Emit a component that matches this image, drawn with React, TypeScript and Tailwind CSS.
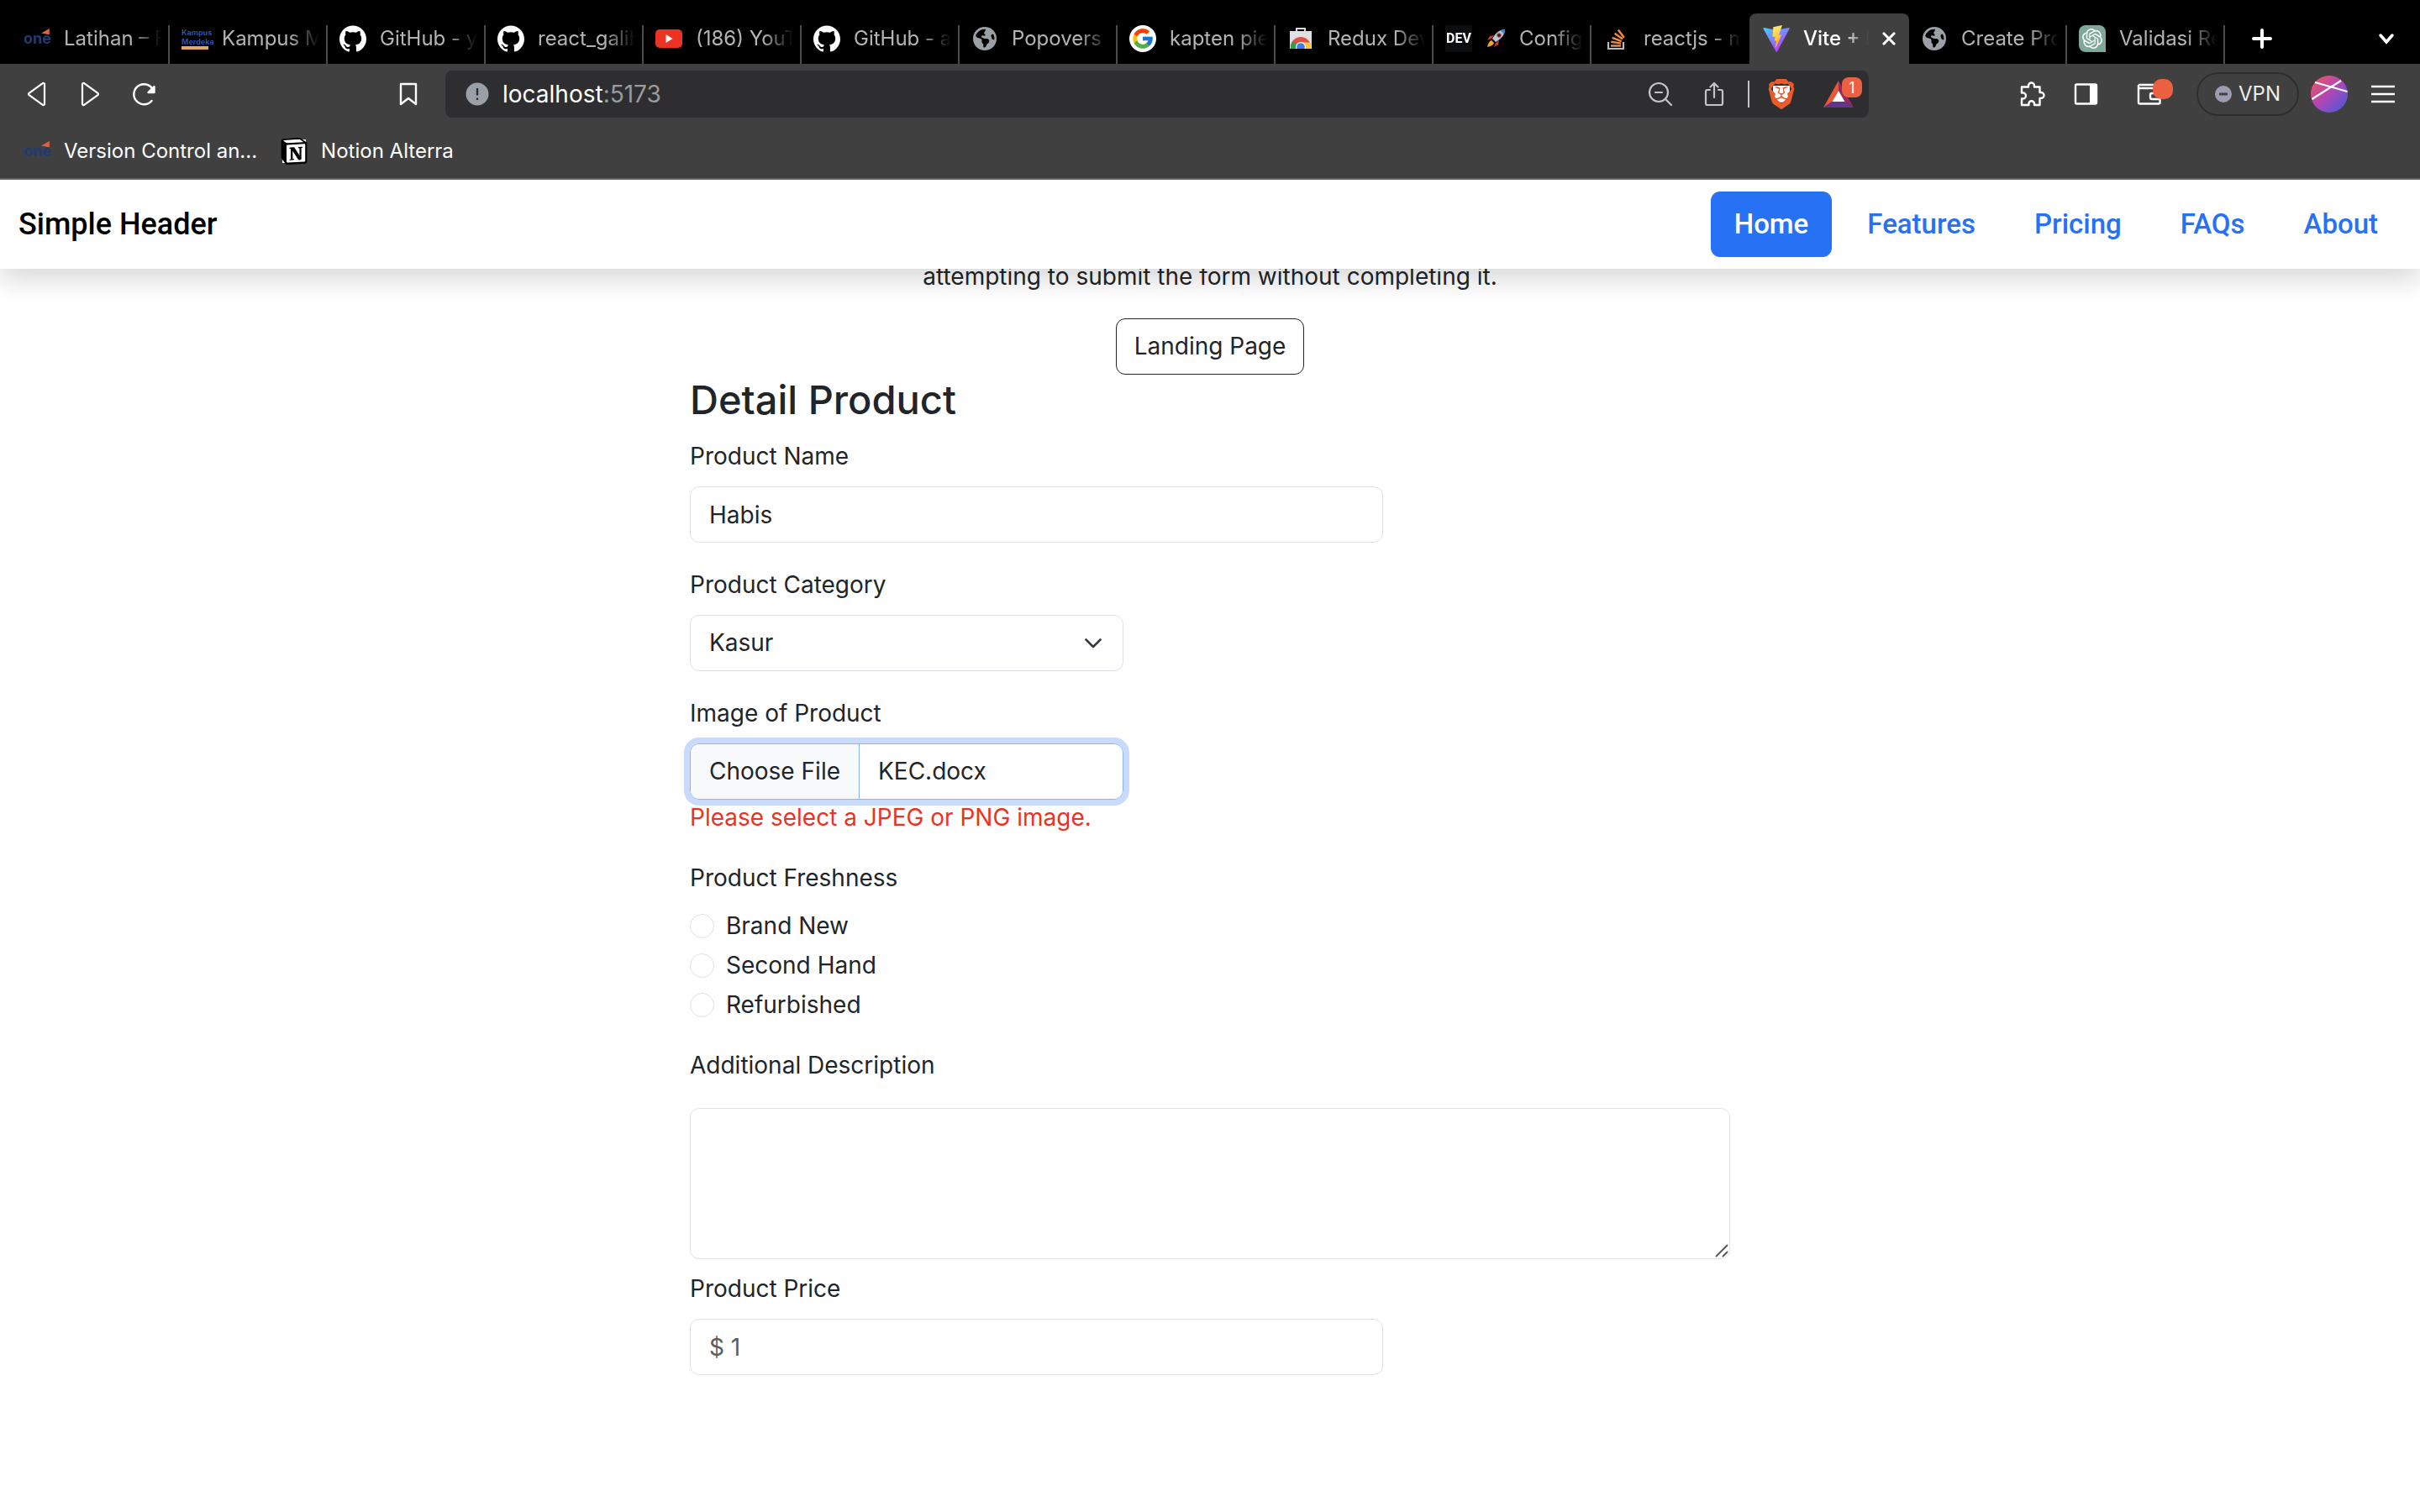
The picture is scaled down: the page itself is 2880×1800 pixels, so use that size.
import React, { useEffect, useRef } from "react";
import { FcGoogle } from "react-icons/fc";
import { SiBrave, SiNotion, SiOpenai, SiGithub } from "react-icons/si";
import { FaEarthAmericas } from "react-icons/fa6";

function OneIcon() {
  return (
    <span className="relative block w-8 text-[18px] font-bold leading-8 text-[#1f3b73]" aria-hidden="true">
      one
      <svg viewBox="0 0 12 10" className="absolute right-0 top-1 h-2 w-3"><path d="M0 7 12 0v9z" fill="#e2643f" /></svg>
    </span>
  );
}

function KampusIcon() {
  return (
    <span className="block w-8 text-[9px] font-bold leading-[11px] text-[#2450b4]" aria-hidden="true">
      <span className="block">Kampus</span>
      <span className="block">Merdeka</span>
      <span className="block h-1 w-8 bg-[#e3a765]" />
    </span>
  );
}

function GithubIcon() {
  return <SiGithub className="size-8 text-white" />;
}

function YoutubeIcon() {
  return (
    <svg viewBox="0 0 32 32" className="size-8">
      <rect y="5" width="32" height="22" rx="5" fill="#ea3323" />
      <path d="m12.500 11 8 5-8 5z" fill="#fff" />
    </svg>
  );
}

function GlobeIcon() {
  return <FaEarthAmericas className="size-7 text-[#9aa0a6]" />;
}

function GoogleIcon() {
  return (
    <span className="flex size-8 items-center justify-center rounded-full bg-white">
      <FcGoogle className="size-7" />
    </span>
  );
}

function WebStoreIcon() {
  return (
    <svg viewBox="0 0 32 32" className="size-8">
      <path d="M11 7V4h10v3" fill="none" stroke="#d8dadc" strokeWidth="2" />
      <path d="M3 7h26v21H3z" fill="#dfe1e3" />
      <clipPath id="bag"><path d="M3 7h26v21H3z" /></clipPath>
      <g clipPath="url(#bag)">
        <circle cx="16" cy="26" r="12" fill="#dd5144" />
        <path d="M5.600 20A12 12 0 0 0 4 28h10l-3-6z" fill="#2ba24c" />
        <path d="M16 20.500h10.700A12 12 0 0 1 28 28H18z" fill="#fcc934" />
        <circle cx="16" cy="26" r="6" fill="#fff" />
        <circle cx="16" cy="26" r="4.800" fill="#3f7ee8" />
      </g>
    </svg>
  );
}

function DevIcon() {
  return (
    <span className="flex size-8 items-center justify-center bg-[#0b0d0e] font-['Roboto',sans-serif] text-[16px] font-bold text-white" aria-hidden="true">DEV</span>
  );
}

function RocketIcon() {
  return (
    <svg viewBox="0 0 24 24" className="size-6 shrink-0">
      <path d="M7 12 2 14l3-5 5-1zM12 17l-2 5 5-3 1-5z" fill="#d8342b" />
      <path d="M23 1c-6 0-11 4-15 11l4 4C19 12 23 7 23 1z" fill="#b9c6d2" />
      <path d="M23 1c-2 0-4 .4-5.500 1.200l4.300 4.300C22.600 5 23 3 23 1z" fill="#3f86c6" />
      <circle cx="16" cy="8" r="2.300" fill="#1d2a3a" stroke="#d8342b" />
      <path d="M7 14c-3 1-4 4-5 8 4-1 7-2 8-5z" fill="#f6a623" />
    </svg>
  );
}

function StackIcon() {
  return (
    <svg viewBox="0 0 32 32" className="size-8">
      <path d="M6 20v8h18v-8" fill="none" stroke="#bcbbbb" strokeWidth="2.200" />
      <g stroke="#f08a3c" strokeWidth="2.400">
        <path d="M9 24.500h12M9.300 19.800l11.800 1.800M10.600 14.800l11 4.400M13.500 9.800l9.600 6.800M17.800 5.500l7 9.200" />
      </g>
    </svg>
  );
}

function ViteIcon() {
  return (
    <svg viewBox="0 0 32 32" className="size-8">
      <defs>
        <linearGradient id="va" x1="0" y1="0" x2="0.600" y2="1"><stop stopColor="#41d1ff" /><stop offset="1" stopColor="#bd34fe" /></linearGradient>
        <linearGradient id="vb" x1="0.400" y1="0" x2="0.600" y2="1"><stop stopColor="#ffea83" /><stop offset="1" stopColor="#ffa800" /></linearGradient>
      </defs>
      <path d="M31.600 4.200 17 31.400a.8.8 0 0 1-1.400 0L.5 4.200a.8.8 0 0 1 .9-1.200L16 5.700l14.800-2.700a.8.8 0 0 1 .8 1.200z" fill="url(#va)" />
      <path d="M23 0 12.300 2.200l-.8 11.800 3.100-.5-1 5.300 2.500-.6-1.400 8 1 .4 6.300-15.300-3.100.6z" fill="url(#vb)" />
    </svg>
  );
}

function OpenaiIcon() {
  return (
    <span className="flex size-8 items-center justify-center rounded-lg rounded-br-none bg-[#7fa89b]">
      <SiOpenai className="size-6 text-white" />
    </span>
  );
}

type TabInfo = { title: string; icon: React.ReactNode; active?: boolean; extra?: React.ReactNode };

const tabs: TabInfo[] = [
  { title: "Latihan – Form", icon: <OneIcon /> },
  { title: "Kampus Merdeka", icon: <KampusIcon /> },
  { title: "GitHub - yusuf", icon: <GithubIcon /> },
  { title: "react_galih", icon: <GithubIcon /> },
  { title: "(186) YouTube", icon: <YoutubeIcon /> },
  { title: "GitHub - alta", icon: <GithubIcon /> },
  { title: "Popovers · Boot", icon: <GlobeIcon /> },
  { title: "kapten pierre", icon: <GoogleIcon /> },
  { title: "Redux DevTools", icon: <WebStoreIcon /> },
  { title: "Configure", icon: <DevIcon />, extra: <RocketIcon /> },
  { title: "reactjs - map", icon: <StackIcon /> },
  { title: "Vite + React", icon: <ViteIcon />, active: true },
  { title: "Create Product", icon: <GlobeIcon /> },
  { title: "Validasi React", icon: <OpenaiIcon /> },
];

function Tab({ tab, divided }: { tab: TabInfo; divided: boolean }) {
  return (
    <div className={tab.active ? "flex h-[60px] w-[190px] items-center gap-4 rounded-t-lg bg-[#404040] pl-4 pr-4 text-white" : "flex h-[60px] w-[188px] flex-col justify-end text-[#b4b4b4]"}>
      {tab.active ? (
        <>
          <span className="flex w-8 shrink-0 justify-center">{tab.icon}</span>
          <button className="min-w-0 flex-1 overflow-hidden whitespace-nowrap text-left text-[24px] font-medium [mask-image:linear-gradient(to_right,#000_60%,transparent)]">{tab.title}</button>
          <button aria-label="Close tab" className="shrink-0">
            <svg viewBox="0 0 16 16" className="size-4" stroke="#fff" strokeWidth="3"><path d="m1 1 14 14M15 1 1 15" /></svg>
          </button>
        </>
      ) : (
        <div className={divided ? "flex h-[46px] border-r-2 border-[#4c4c4c] pl-3.5 pr-2" : "flex h-[46px] border-r-2 border-transparent pl-3.5 pr-2"}>
          <button className="flex h-8 min-w-0 flex-1 items-center gap-4 overflow-hidden whitespace-nowrap text-left text-[24px] [mask-image:linear-gradient(to_right,#000_78%,transparent)]">
            <span className="flex w-8 shrink-0 justify-center">{tab.icon}</span>
            {tab.extra}
            <span>{tab.title}</span>
          </button>
        </div>
      )}
    </div>
  );
}

function TabStrip() {
  return (
    <div className="flex h-[76px] items-end bg-black pl-3.5">
      {tabs.map((tab, i) => (
        <Tab key={i} tab={tab} divided={!tabs[i + 1]?.active} />
      ))}
      <button aria-label="New tab" className="ml-8 flex h-[60px] items-center">
        <svg viewBox="0 0 24 24" className="size-6" stroke="#fff" strokeWidth="4" strokeLinecap="round"><path d="M12 2v20M2 12h20" /></svg>
      </button>
      <button aria-label="Search tabs" className="ml-auto mr-[30px] flex h-[60px] items-center">
        <svg viewBox="0 0 20 20" className="size-5" fill="none" stroke="#fff" strokeWidth="3.500" strokeLinecap="round"><path d="m3 6 7 8 7-8" /></svg>
      </button>
    </div>
  );
}

function Toolbar() {
  return (
    <div className="flex h-[72px] items-center bg-[#404040] text-white">
      <div className="flex w-[530px] shrink-0 items-center pl-7">
        <button aria-label="Back"><svg viewBox="0 0 32 32" className="size-8" fill="none" stroke="#fff" strokeWidth="2.200" strokeLinejoin="round"><path d="M25 4.500v23a1.500 1.500 0 0 1-2.500 1.200L6.600 17.200a1.500 1.500 0 0 1 0-2.400L22.500 3.300A1.500 1.500 0 0 1 25 4.500z" /></svg></button>
        <button aria-label="Forward" className="ml-8"><svg viewBox="0 0 32 32" className="size-8" fill="none" stroke="#fff" strokeWidth="2.200" strokeLinejoin="round"><path d="M6 4.500v23a1.500 1.500 0 0 0 2.500 1.200l15.900-11.500a1.500 1.500 0 0 0 0-2.400L8.500 3.300A1.500 1.500 0 0 0 6 4.500z" /></svg></button>
        <button aria-label="Reload" className="ml-8"><svg viewBox="0 0 32 32" className="size-8" fill="none" stroke="#fff" strokeWidth="2.400" strokeLinecap="round"><path d="M27 13.500A12 12 0 1 0 24.500 24" /><path d="M27.500 7v7h-7z" fill="#fff" strokeLinejoin="round" /></svg></button>
        <button aria-label="Bookmark this page" className="ml-auto mr-7"><svg viewBox="0 0 32 32" className="size-8" fill="none" stroke="#fff" strokeWidth="2.400" strokeLinejoin="round"><path d="M7 4h18v24l-9-7-9 7z" /></svg></button>
      </div>
      <div className="flex h-14 flex-1 items-center rounded-lg bg-[#2e2e30] pl-6 pr-2">
        <svg viewBox="0 0 28 28" className="size-7"><circle cx="14" cy="14" r="13.500" fill="#9aa0a6" /><path d="M14 7v8.500M14 18.500v2.500" stroke="#2e2e30" strokeWidth="2.400" /></svg>
        <label htmlFor="url" className="sr-only">Address</label>
        <div className="relative ml-4 flex-1 text-[28px] leading-9">
          <input id="url" defaultValue="localhost:5173" className="w-full bg-transparent text-transparent outline-none" />
          <span aria-hidden="true" className="pointer-events-none absolute inset-0 text-[#9b9b9d]"><span className="text-white">localhost</span>:5173</span>
        </div>
        <button aria-label="Zoom"><svg viewBox="0 0 32 32" className="size-8" fill="none" stroke="#c4c4c6" strokeWidth="2.200" strokeLinecap="round"><circle cx="14" cy="14" r="11" /><path d="m22 22 7 7M10 14h8" /></svg></button>
        <button aria-label="Share" className="ml-8"><svg viewBox="0 0 32 32" className="size-8" fill="none" stroke="#c4c4c6" strokeWidth="2.200" strokeLinecap="round" strokeLinejoin="round"><path d="M11 11H8a2 2 0 0 0-2 2v14a2 2 0 0 0 2 2h16a2 2 0 0 0 2-2V13a2 2 0 0 0-2-2h-3M16 20V3M11.500 7.500 16 3l4.500 4.500" /></svg></button>
        <span className="ml-6 h-8 w-0.5 bg-[#c4c4c6]" />
        <button aria-label="Brave Shields" className="relative ml-5">
          <span className="absolute inset-x-2 inset-y-2 bg-white" />
          <SiBrave className="relative size-9 text-[#ea5a2a]" />
        </button>
        <button aria-label="Brave Rewards" className="relative ml-8 pr-2.5">
          <svg viewBox="0 0 36 32" className="h-8 w-9"><path d="M18 0 0 32l10.500-7L18 12z" fill="#ef5533" /><path d="m18 0 18 32-10.500-7L18 12z" fill="#98295f" /><path d="m0 32 10.500-7h15L36 32z" fill="#63348e" /><path d="m18 12 7.500 13h-15z" fill="#fff" /></svg>
          <span className="absolute -top-1 right-0 flex size-6 items-center justify-center rounded-lg bg-[#ea6040] text-[18px]">1</span>
        </button>
      </div>
      <div className="flex w-[656px] shrink-0 items-center justify-end pr-[30px]">
        <button aria-label="Extensions"><svg viewBox="0 0 32 32" className="size-8" fill="none" stroke="#fff" strokeWidth="2.400" strokeLinejoin="round"><path d="M4 7.500h8V6a3.500 3.500 0 0 1 7 0v1.500h6.500V14H27a3.500 3.500 0 0 1 0 7h-1.500v8H19v-1.500a3.300 3.300 0 0 0-6.600 0V29H4v-7.500h1.500a3.500 3.500 0 0 0 0-7H4z" /></svg></button>
        <button aria-label="Sidebar" className="ml-8"><svg viewBox="0 0 32 32" className="size-8"><rect x="4" y="4.500" width="25" height="23" rx="1.500" fill="none" stroke="#fff" strokeWidth="2.400" /><path d="M21 4h8v24h-8z" fill="#fff" /></svg></button>
        <button aria-label="Wallet" className="relative ml-11">
          <svg viewBox="0 0 32 32" className="size-8" fill="none" stroke="#fff" strokeWidth="2.400"><path d="M3 5v21a1.500 1.500 0 0 0 1.500 1.500H27a1.500 1.500 0 0 0 1.500-1.500V9H3M3 5h24" /><path d="M28 15h-9a2 2 0 0 0-2 2v3a2 2 0 0 0 2 2h9" /></svg>
          <span className="absolute -right-3 -top-0.5 size-6 rounded-[10px] bg-[#ea6040]" />
        </button>
        <button className="ml-10 flex h-[52px] items-center gap-2 rounded-full border-2 border-[#2e2e2e] px-5 text-[24px] text-[#ededed]">
          <svg viewBox="0 0 20 20" className="size-5"><circle cx="10" cy="10" r="10" fill="#9a9db0" /><path d="M5 10h10" stroke="#404040" strokeWidth="3" /></svg>
          VPN
        </button>
        <button aria-label="Profile" className="ml-3.5">
          <svg viewBox="0 0 44 44" className="size-11">
            <defs><linearGradient id="av" x1="0" y1="0" x2="1" y2="1"><stop offset="0.100" stopColor="#e4576a" /><stop offset="0.450" stopColor="#b945b0" /><stop offset="1" stopColor="#3a5be0" /></linearGradient></defs>
            <circle cx="22" cy="22" r="22" fill="url(#av)" />
            <path d="M5 8 43.500 19M1.500 28 36 6" stroke="#fff" strokeWidth="2.200" />
          </svg>
        </button>
        <button aria-label="Menu" className="ml-7"><svg viewBox="0 0 28 24" className="h-6 w-7" stroke="#fff" strokeWidth="2.400"><path d="M0 3h28M0 12h28M0 21h28" /></svg></button>
      </div>
    </div>
  );
}

function Bookmarks() {
  return (
    <div className="flex h-[66px] items-center border-b-2 border-[#666] bg-[#404040] pl-7 text-[24px] text-white">
      <a href="#version-control" className="flex items-center gap-4"><OneIcon />Version Control an...</a>
      <a href="#notion" className="ml-7 flex items-center gap-4">
        <span className="relative flex size-8 items-center justify-center">
          <span className="absolute inset-0.5 bg-white" />
          <SiNotion className="relative size-8 text-black" />
        </span>
        Notion Alterra
      </a>
    </div>
  );
}

const links = ["Home", "Features", "Pricing", "FAQs", "About"];

function SiteHeader() {
  return (
    <header className="relative z-10 flex items-center justify-between bg-white px-[22px] py-3.5 font-['Roboto',sans-serif] font-medium shadow-[0_14px_29px_rgba(0,0,0,0.15)]">
      <a href="#top" className="text-[36px] leading-[50px] text-black">Simple Header</a>
      <nav className="flex gap-3.5 text-[33px] leading-[50px]">
        {links.map((link, i) => (
          <a key={link} href={`#${link.toLowerCase()}`} className={i === 0 ? "rounded-[11px] bg-[#2771f5] px-7 py-3.5 text-white" : "px-7 py-3.5 text-[#2771f5]"}>{link}</a>
        ))}
      </nav>
    </header>
  );
}

function ImageField() {
  const ref = useRef<HTMLInputElement>(null);
  useEffect(() => {
    const data = new DataTransfer();
    data.items.add(new File(["kec"], "KEC.docx"));
    if (ref.current) ref.current.files = data.files;
  }, []);
  return (
    <div className="mb-[29px]">
      <label htmlFor="image" className="mb-3.5 block">Image of Product</label>
      <input ref={ref} id="image" type="file" className="block h-[67px] w-5/12 overflow-hidden rounded-[11px] border border-[#86b7fe] leading-[43px] shadow-[0_0_0_7px_#c9dafd] file:mr-[22px] file:h-[65px] file:rounded-none file:border-r file:border-[#86b7fe] file:bg-[#f8f9fa] file:px-[22px] file:text-[#212529]" />
      <p className="text-[#eb3323]">Please select a JPEG or PNG image.</p>
    </div>
  );
}

function ProductForm() {
  return (
    <form className="mx-auto w-full max-w-[1238px]">
      <h2 className="mb-4 text-[47px] font-medium leading-[60px]">Detail Product</h2>
      <div className="mb-[29px]">
        <label htmlFor="name" className="mb-3.5 block">Product Name</label>
        <input id="name" type="text" defaultValue="Habis" className="block h-[67px] w-2/3 rounded-[11px] border border-[#dee2e6] px-[22px]" />
      </div>
      <div className="mb-[29px]">
        <label htmlFor="category" className="mb-3.5 block">Product Category</label>
        <div className="relative w-5/12">
          <select id="category" className="block h-[67px] w-full appearance-none rounded-[11px] border border-[#dee2e6] bg-white px-[22px]">
            <option>Kasur</option>
          </select>
          <svg viewBox="0 0 20 12" className="pointer-events-none absolute right-[26px] top-7 h-3 w-5" fill="none" stroke="#343a40" strokeWidth="2.600" strokeLinecap="round" strokeLinejoin="round"><path d="m1.500 1.500 8.500 8.500 8.500-8.500" /></svg>
        </div>
      </div>
      <ImageField />
      <fieldset className="mb-[25px]">
        <legend className="mb-3.5">Product Freshness</legend>
        {["Brand New", "Second Hand", "Refurbished"].map((option) => (
          <label key={option} className="mb-1 flex items-center gap-3.5">
            <input type="radio" name="freshness" className="size-[29px] appearance-none rounded-full border border-[#dee2e6]" />
            {option}
          </label>
        ))}
      </fieldset>
      <label htmlFor="description" className="mb-[29px] block">Additional Description</label>
      <div className="relative mb-3.5">
        <textarea id="description" className="block h-[180px] w-full resize-none rounded-[11px] border border-[#dee2e6] px-[22px] py-[11px]" />
        <svg viewBox="0 0 16 16" className="pointer-events-none absolute bottom-0.5 right-0.5 size-4" stroke="#555" strokeWidth="1.800"><path d="M1 15 15 1M9 15l6-6" /></svg>
      </div>
      <label htmlFor="price" className="mb-3.5 block">Product Price</label>
      <input id="price" type="text" placeholder="$ 1" className="block h-[67px] w-2/3 rounded-[11px] border border-[#dee2e6] px-[22px] placeholder:text-[#5a5e62]" />
    </form>
  );
}

export default function App() {
  return (
    <div className="min-h-screen bg-white font-['Inter',sans-serif]">
      <TabStrip />
      <Toolbar />
      <Bookmarks />
      <SiteHeader />
      <main className="-mt-3 pb-20 text-[28px] leading-[43px] text-[#212529]">
        <p className="mb-7 text-center">attempting to submit the form without completing it.</p>
        <div className="flex justify-center">
          <button className="h-[67px] rounded-[11px] border border-[#212529] px-[21px]">Landing Page</button>
        </div>
        <ProductForm />
      </main>
    </div>
  );
}
